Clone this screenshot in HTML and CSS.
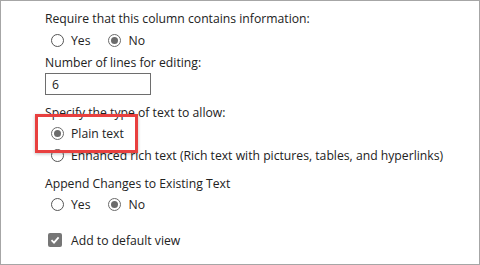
FILE: index.html
```html
<!DOCTYPE html>
<html lang="en">
<head>
    <meta charset="UTF-8">
    <meta name="viewport" content="width=device-width, initial-scale=1.0">
    <title>Column Settings</title>
    <link rel="stylesheet" href="styles.css">
</head>
<body>
    <div class="panel">
        <div class="label">Require that this column contains information:</div>
        <div class="options">
            <span class="option"><span class="radio"></span>Yes</span>
            <span class="option"><span class="radio checked"></span>No</span>
        </div>

        <div class="label">Number of lines for editing:</div>
        <div class="textbox">6</div>

        <div class="label spaced">Specify the type of text to allow:</div>
        <div class="options highlight-row">
            <span class="option"><span class="radio checked"></span>Plain text</span>
            <div class="highlight"></div>
        </div>
        <div class="options">
            <span class="option"><span class="radio"></span>Enhanced rich text (Rich text with pictures, tables, and hyperlinks)</span>
        </div>

        <div class="label spaced">Append Changes to Existing Text</div>
        <div class="options">
            <span class="option"><span class="radio"></span>Yes</span>
            <span class="option"><span class="radio checked"></span>No</span>
        </div>

        <div class="check-row">
            <span class="checkbox">
                <svg width="10" height="10" viewBox="0 0 10 10"><path d="M1.5 5.2 L4 7.6 L8.6 2.4" fill="none" stroke="#fff" stroke-width="1.8"/></svg>
            </span>
            Add to default view
        </div>
    </div>
</body>
</html>
```

FILE: styles.css
```css
body {
    margin: 0;
    font-family: "Open Sans", "Noto Sans", Arial, sans-serif;
    font-size: 12.2px;
    color: #222;
    background-color: white;
}
.panel {
    box-sizing: border-box;
    width: 480px;
    height: 265px;
    border: 1px solid #a6a6a6;
    padding: 6px 0 0 44px;
}
.label {
    height: 22px;
    display: flex;
    align-items: center;
}
.label.spaced {
    margin-top: 7px;
    height: 20px;
}
.options {
    height: 22px;
    display: flex;
    align-items: center;
    padding-left: 6px;
    gap: 18px;
}
.option {
    display: flex;
    align-items: center;
}
.radio {
    box-sizing: border-box;
    width: 13px;
    height: 13px;
    border: 1px solid #555;
    border-radius: 50%;
    margin-right: 7px;
    display: flex;
    align-items: center;
    justify-content: center;
}
.radio.checked {
    border-color: #6b6b6b;
}
.radio.checked::after {
    content: "";
    width: 7px;
    height: 7px;
    border-radius: 50%;
    background-color: #6b6b6b;
}
.textbox {
    box-sizing: border-box;
    width: 106px;
    height: 22px;
    border: 1px solid #6e6e6e;
    padding-left: 6px;
    display: flex;
    align-items: center;
}
.highlight-row {
    position: relative;
}
.highlight {
    position: absolute;
    left: -10px;
    top: -8px;
    width: 103px;
    height: 39px;
    box-sizing: border-box;
    border: 3px solid #e8403f;
    box-shadow: 0 1px 3px rgba(0, 0, 0, 0.25);
}
.check-row {
    display: flex;
    align-items: center;
    height: 22px;
    margin-top: 14px;
    padding-left: 3px;
}
.checkbox {
    width: 14px;
    height: 14px;
    border-radius: 2px;
    background-color: #767676;
    margin-right: 9px;
    display: flex;
    align-items: center;
    justify-content: center;
}
```
